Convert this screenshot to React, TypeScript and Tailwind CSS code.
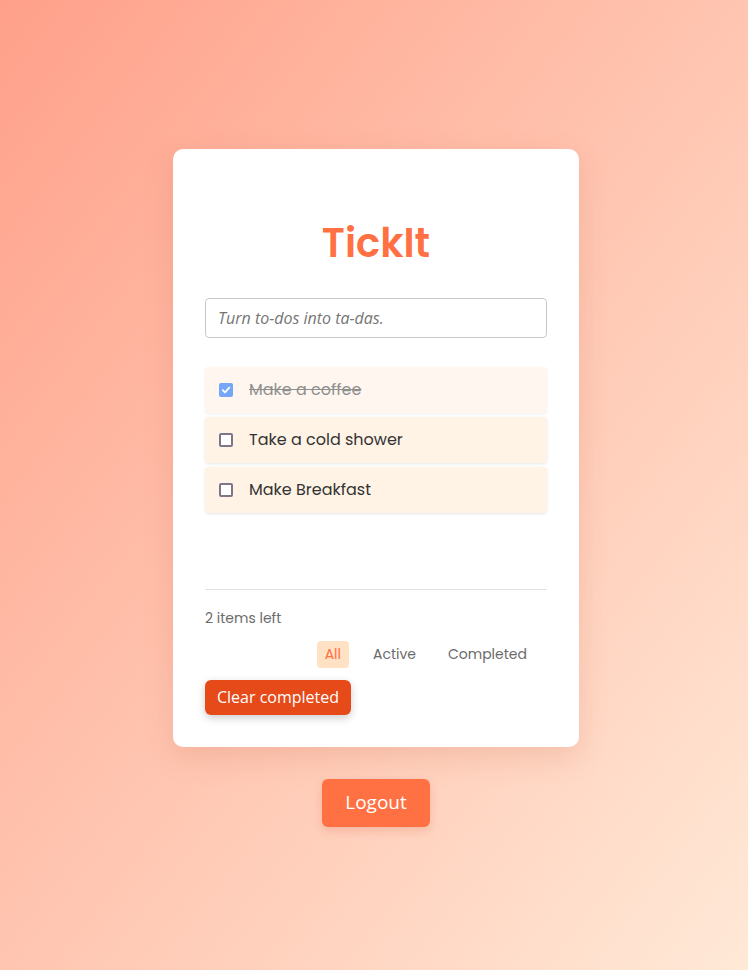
import React from "react";

const poppins = { fontFamily: "Poppins, 'Open Sans', sans-serif" } as React.CSSProperties;

function Box({ done }: { done?: boolean }) {
  if (done) {
    return (
      <span className="flex h-[14px] w-[14px] items-center justify-center rounded-[2px] bg-[#1a6ef5]">
        <svg width="10" height="10" viewBox="0 0 10 10" fill="none">
          <path d="M1.8 5.2 L4 7.3 L8.3 2.6" stroke="white" strokeWidth="1.8" strokeLinecap="round" strokeLinejoin="round" />
        </svg>
      </span>
    );
  }
  return <span className="h-[14px] w-[14px] rounded-[2px] border-2 border-[#7c7689] bg-white" />;
}

function Item({ text, done }: { text: string; done?: boolean }) {
  return (
    <div
      className={`flex h-[46px] items-center gap-4 rounded bg-[#fff3e6] pl-[14px] shadow-[0_1px_3px_rgba(0,0,0,0.1)] ${done ? "opacity-60" : ""}`}
    >
      <Box done={done} />
      <span className={`pt-px text-[16px] ${done ? "line-through text-[#444]" : "text-[#333]"}`}>{text}</span>
    </div>
  );
}

export default function App() {
  return (
    <div
      className="flex min-h-screen flex-col items-center justify-center bg-gradient-to-br from-[#ffa08a] to-[#ffe9d7] pl-1 pt-[5px]"
      style={poppins}
    >
      <div className="flex w-[406px] flex-col rounded-[10px] bg-white px-8 pb-8 pt-8 shadow-[0_10px_30px_rgba(200,100,70,0.2)]">
        <h1 className="mt-[38px] text-center text-[40px] font-semibold leading-[48px] text-[#ff7043]">
          TickIt
        </h1>
        <input
          placeholder="Turn to-dos into ta-das."
          className="mt-[31px] h-10 w-full rounded border border-[#c8c8c8] px-3 text-[16px] italic text-[#333] placeholder:text-[#757575] outline-none"
          style={{ fontFamily: "'Open Sans', sans-serif" }}
        />
        <div className="mt-[29px] flex flex-col gap-1">
          <Item text="Make a coffee" done />
          <Item text="Take a cold shower" />
          <Item text="Make Breakfast" />
        </div>
        <div className="mt-[76px] border-t border-[#e0e0e0]" />
        <div className="mt-[18px] text-[14px] leading-5 text-[#6b6b6b]">2 items left</div>
        <div className="mt-[13px] flex justify-end gap-4 pr-3 text-[14px]">
          <button className="h-[27px] rounded bg-[#ffe1c4] px-2 text-[#ff7043]">All</button>
          <button className="h-[27px] rounded px-2 text-[#6b6b6b]">Active</button>
          <button className="h-[27px] rounded px-2 text-[#6b6b6b]">Completed</button>
        </div>
        <div className="mt-3">
          <button
            className="h-[35px] w-[146px] rounded-md bg-[#e64a19] text-[16px] text-white shadow-[0_3px_8px_rgba(0,0,0,0.2)]"
            style={{ fontFamily: "'Open Sans', sans-serif" }}
          >
            Clear completed
          </button>
        </div>
      </div>
      <button
        className="mt-8 h-12 w-[108px] rounded-md bg-[#ff7043] text-[19px] text-white shadow-[0_4px_10px_rgba(200,80,40,0.2)]"
        style={{ fontFamily: "'Open Sans', sans-serif" }}
      >
        Logout
      </button>
    </div>
  );
}
